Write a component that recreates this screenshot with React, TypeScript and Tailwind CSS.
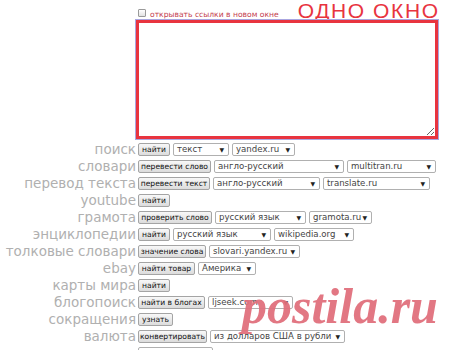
import React from "react";

type Ctl = { t: "b" | "s"; label: string; w: number };
type Row = { label: string; ctl: Ctl[] };

const rows: Row[] = [
  { label: "поиск", ctl: [{ t: "b", label: "найти", w: 32 }, { t: "s", label: "текст", w: 56 }, { t: "s", label: "yandex.ru", w: 63 }] },
  { label: "словари", ctl: [{ t: "b", label: "перевести слово", w: 73 }, { t: "s", label: "англо-русский", w: 130 }, { t: "s", label: "multitran.ru", w: 89 }] },
  { label: "перевод текста", ctl: [{ t: "b", label: "перевести текст", w: 72 }, { t: "s", label: "англо-русский", w: 107 }, { t: "s", label: "translate.ru", w: 107 }] },
  { label: "youtube", ctl: [{ t: "b", label: "найти", w: 32 }] },
  { label: "грамота", ctl: [{ t: "b", label: "проверить слово", w: 74 }, { t: "s", label: "русский язык", w: 91 }, { t: "s", label: "gramota.ru", w: 63 }] },
  { label: "энциклопедии", ctl: [{ t: "b", label: "найти", w: 32 }, { t: "s", label: "русский язык", w: 98 }, { t: "s", label: "wikipedia.org", w: 80 }] },
  { label: "толковые словари", ctl: [{ t: "b", label: "значение слова", w: 68 }, { t: "s", label: "slovari.yandex.ru", w: 91 }] },
  { label: "ebay", ctl: [{ t: "b", label: "найти товар", w: 57 }, { t: "s", label: "Америка", w: 58 }] },
  { label: "карты мира", ctl: [{ t: "b", label: "найти", w: 32 }] },
  { label: "блогопоиск", ctl: [{ t: "b", label: "найти в блогах", w: 67 }, { t: "s", label: "ljseek.com", w: 85 }] },
  { label: "сокращения", ctl: [{ t: "b", label: "узнать", w: 35 }] },
  { label: "валюта", ctl: [{ t: "b", label: "конвертировать", w: 69 }, { t: "s", label: "из долларов США в рубли", w: 135 }] },
  { label: "", ctl: [{ t: "s", label: "", w: 75 }] },
];

function Button({ label, w }: { label: string; w: number }) {
  return (
    <div
      className="h-[13px] flex items-center justify-center whitespace-nowrap overflow-hidden rounded-[2px] border border-[#a4a4a4] bg-gradient-to-b from-[#f8f8f8] to-[#dcdcdc] text-[7.6px] leading-none text-[#111]"
      style={{ width: w }}
    >
      {label}
    </div>
  );
}

function Select({ label, w }: { label: string; w: number }) {
  return (
    <div
      className="h-[13px] flex items-center justify-between whitespace-nowrap overflow-hidden rounded-[2px] border border-[#b0b0b0] bg-white pl-[3px] pr-[4px] text-[8.6px] leading-none text-[#444]"
      style={{ width: w }}
    >
      <span>{label}</span>
      <span className="text-[6px] text-[#222]">▼</span>
    </div>
  );
}

export default function App() {
  return (
    <div className="relative w-[460px] h-[350px] overflow-hidden bg-white font-['DejaVu_Sans',sans-serif]">
      <div className="ml-[136px]">
        <div className="h-[20px] flex items-end">
          <div className="ml-[2px] mb-[3px] w-[8px] h-[8px] rounded-[1px] border border-[#9a9a9a] bg-gradient-to-b from-white to-[#e2e2e2]" />
          <span className="ml-[4px] mb-[1px] text-[7.6px] leading-none text-[#c4404e]">открывать ссылки в новом окне</span>
          <span className="ml-[19px] font-['Liberation_Sans',sans-serif] text-[21px] leading-[21px] tracking-[1.6px] text-[#e8343f] -mb-[1px]">ОДНО ОКНО</span>
        </div>
        <textarea
          className="block w-[302px] h-[119px] border-[3px] border-[#e8343f] outline outline-1 outline-[#aaa6e0] bg-white resize"
          readOnly
        />
      </div>
      <div className="mt-[2px] flex flex-col">
        {rows.map((r, i) => (
          <div key={i} className="h-[17px] grid grid-cols-[136px_1fr] gap-x-[2px] items-center">
            <div className="text-right text-[13.5px] leading-[17px] text-[#b0b0b0] whitespace-nowrap">{r.label}</div>
            <div className="flex items-center gap-x-[3px]">
              {r.ctl.map((c, j) =>
                c.t === "b" ? <Button key={j} label={c.label} w={c.w} /> : <Select key={j} label={c.label} w={c.w} />
              )}
            </div>
          </div>
        ))}
      </div>
      <div className="absolute left-[242px] top-[281px] font-['Liberation_Serif',serif] font-bold italic text-[50px] leading-none text-[#e0707c]/95 whitespace-nowrap">
        postila.ru
      </div>
    </div>
  );
}
